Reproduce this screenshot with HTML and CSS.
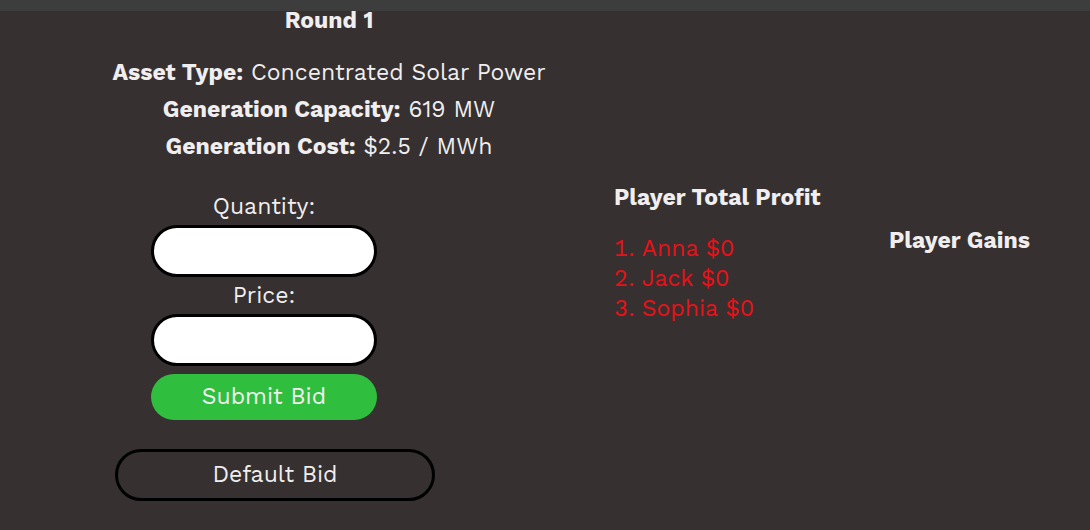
FILE: index.html
```html
<!DOCTYPE html>
<html lang="en">
<head>
<meta charset="utf-8">
<meta name="viewport" content="width=device-width, initial-scale=1">
<title>Round 1</title>
<link rel="stylesheet" href="styles.css">
</head>
<body>
<header class="topbar"></header>
<main class="board">
  <section class="bidding">
    <h1 class="heading round">Round 1</h1>
    <div class="asset">
      <p class="fact"><strong>Asset Type:</strong> Concentrated Solar Power</p>
      <p class="fact"><strong>Generation Capacity:</strong> 619 MW</p>
      <p class="fact"><strong>Generation Cost:</strong> $2.5 / MWh</p>
    </div>
    <div class="actions">
      <form class="bid-form">
        <label class="label" for="quantity">Quantity:</label>
        <input class="field" id="quantity" type="text">
        <label class="label" for="price">Price:</label>
        <input class="field" id="price" type="text">
        <button class="submit" type="button">Submit Bid</button>
      </form>
      <button class="default-bid" type="button">Default Bid</button>
    </div>
  </section>
  <section class="profit">
    <h2 class="heading">Player Total Profit</h2>
    <ol class="ranking">
      <li>Anna $0</li>
      <li>Jack $0</li>
      <li>Sophia $0</li>
    </ol>
  </section>
  <section class="gains">
    <h2 class="heading">Player Gains</h2>
  </section>
</main>
</body>
</html>
```

FILE: styles.css
```css
* {
  box-sizing: border-box;
}

body {
  margin: 0;
  min-height: 100vh;
  background: #363030;
  color: #f0eeee;
  font: 23px/30px "Work Sans", Inter, sans-serif;
}

h1, h2, p, ol {
  margin: 0;
  padding: 0;
}

.topbar {
  height: 11px;
  background: #3d3d3e;
}

.board {
  display: grid;
  grid-template-columns: 502fr 275fr 201fr;
  align-items: center;
  padding-left: 112px;
}

.heading {
  font-size: 23px;
  line-height: 30px;
  font-weight: 700;
  white-space: nowrap;
}

.bidding {
  display: flex;
  flex-direction: column;
  align-items: flex-start;
}

.round {
  width: 434px;
  line-height: 20px;
  text-align: center;
}

.asset {
  width: 434px;
  margin-top: 23px;
  text-align: center;
}

.fact {
  line-height: 37px;
  white-space: nowrap;
}

.actions {
  padding-left: 3px;
}

.bid-form {
  display: flex;
  flex-direction: column;
  align-items: center;
  width: 298px;
  margin-top: 23px;
}

.label {
  line-height: 37px;
}

.field {
  width: 226px;
  height: 52px;
  padding: 0 24px;
  border: 3px solid #000;
  border-radius: 26px;
  background: #fff;
  font: inherit;
}

.submit {
  width: 226px;
  height: 46px;
  margin-top: 8px;
  border: 0;
  border-radius: 23px;
  background: #30be3e;
  color: inherit;
  font: inherit;
}

.default-bid {
  display: block;
  width: 320px;
  height: 52px;
  margin-top: 29px;
  border: 3px solid #000;
  border-radius: 26px;
  background: transparent;
  color: inherit;
  font: inherit;
}

.ranking {
  margin: 21px 0 6px;
  color: #ea1018;
  list-style-position: inside;
}

.gains {
  padding-bottom: 30px;
}
```
